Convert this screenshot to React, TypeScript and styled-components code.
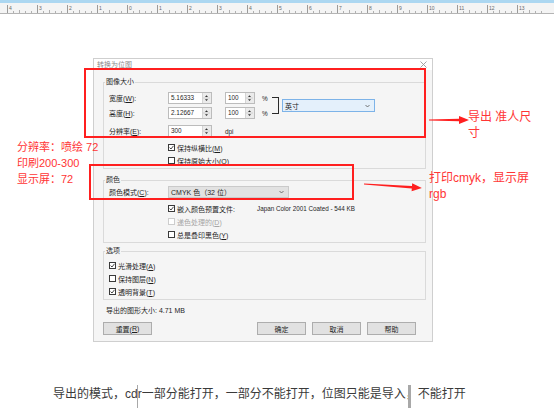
import type { ReactNode } from "react";
import styled, { createGlobalStyle } from "styled-components";

const GlobalStyle = createGlobalStyle`
  html, body {
    margin: 0;
    padding: 0;
    background: #fff;
  }
  body {
    font-family: "Liberation Sans", "Noto Sans CJK SC", sans-serif;
  }
`;

const Screen = styled.div`
  position: relative;
  width: 554px;
  height: 408px;
  overflow: hidden;
  background: #fff;
`;

// ruler strip along the top of the drawing window
const RulerBar = styled.div`
  height: 10px;
  border-top: 3px solid #acd7f1;
  border-bottom: 1px solid #b4b4b4;
  background: #f4f4f4;
  svg {
    display: block;
  }
`;

const Canvas = styled.div`
  position: relative;
  height: 394px;
`;

const PageEdge = styled.div<{ $left: number; $w: number }>`
  position: absolute;
  top: 327px;
  bottom: 0;
  left: ${(p) => p.$left}px;
  width: ${(p) => p.$w}px;
  background: #a8a8a8;
`;

const Caption = styled.p`
  margin: 44px 0 0 53px;
  font-size: 12px;
  line-height: 16px;
  color: #3a3a3a;
  white-space: nowrap;
`;

// dialog
const Dialog = styled.div`
  margin: 44px 0 0 93px;
  width: 340px;
  box-sizing: border-box;
  border: 1px solid #cfcfcf;
  background: #f5f5f5;
  font-size: 7px;
  color: #1f1f1f;
  display: flex;
  flex-direction: column;
`;

const TitleBar = styled.div`
  height: 11px;
  background: #fff;
  display: flex;
  align-items: center;
  justify-content: space-between;
  padding: 0 5px 0 3px;
  color: #8c8c8c;
  line-height: 11px;
`;

const Body = styled.div`
  padding: 7px 6px 6px 9px;
  display: flex;
  flex-direction: column;
`;

const Group = styled.fieldset<{ $gap?: number; $pt?: number }>`
  margin: ${(p) => p.$gap ?? 0}px 0 0 0;
  padding: ${(p) => p.$pt ?? 0}px 5px 1px 5px;
  border: 1px solid #dadada;
  min-width: 0;
  display: flex;
  flex-direction: column;
`;

const Legend = styled.legend`
  padding: 0 1px;
  margin-left: -4px;
  line-height: 10px;
  font-size: 7px;
  color: #2a2a2a;
`;

const DimBlock = styled.div`
  display: flex;
  align-items: center;
`;

const DimRows = styled.div`
  display: flex;
  flex-direction: column;
  gap: 3px;
`;

const FieldRow = styled.div<{ $mt?: number }>`
  display: flex;
  align-items: center;
  height: 12px;
  margin-top: ${(p) => p.$mt ?? 0}px;
`;

const FieldLabel = styled.span`
  width: 59px;
  flex: none;
  white-space: nowrap;
`;

const SpinField = styled.div<{ $w: number; $ml?: number }>`
  width: ${(p) => p.$w}px;
  margin-left: ${(p) => p.$ml ?? 0}px;
  height: 12px;
  box-sizing: border-box;
  border: 1px solid #bcbcbc;
  background: #fff;
  display: flex;
`;

const SpinValue = styled.span`
  flex: 1;
  padding-left: 2px;
  font-size: 6.4px;
  line-height: 10px;
`;

const SpinButtons = styled.span`
  width: 8px;
  border-left: 1px solid #d4d4d4;
  background: #ebebeb;
  svg {
    display: block;
  }
`;

const Unit = styled.span<{ $w: number; $ml: number }>`
  width: ${(p) => p.$w}px;
  margin-left: ${(p) => p.$ml}px;
  font-size: 6.4px;
`;

const Bracket = styled.div`
  width: 6px;
  height: 15px;
  border: 1.5px solid #2b2b2b;
  border-left: none;
  margin-right: 3px;
`;

const Select = styled.div<{ $w: number; $tint?: boolean }>`
  width: ${(p) => p.$w}px;
  height: ${(p) => (p.$tint ? 13 : 12)}px;
  box-sizing: border-box;
  border: 1px solid ${(p) => (p.$tint ? "#7db3e8" : "#cacaca")};
  background: ${(p) => (p.$tint ? "#e4f0fb" : "#e2e2e2")};
  display: flex;
  align-items: center;
  justify-content: space-between;
  padding: 0 4px 0 2px;
  white-space: nowrap;
`;

const CheckList = styled.div<{ $mt?: number; $indent?: number }>`
  display: flex;
  flex-direction: column;
  margin-top: ${(p) => p.$mt ?? 0}px;
  padding-left: ${(p) => p.$indent ?? 0}px;
`;

const CheckRow = styled.div<{ $off?: boolean }>`
  height: 13px;
  display: flex;
  align-items: center;
  gap: 2px;
  white-space: nowrap;
  color: ${(p) => (p.$off ? "#a6a6a6" : "inherit")};
`;

const Box = styled.span<{ $off?: boolean }>`
  width: 7px;
  height: 7px;
  box-sizing: border-box;
  border: 1px solid ${(p) => (p.$off ? "#cdcdcd" : "#3a3a3a")};
  background: #fff;
  flex: none;
  svg {
    display: block;
  }
`;

const CheckText = styled.span<{ $w?: number }>`
  width: ${(p) => (p.$w ? `${p.$w}px` : "auto")};
`;

const ProfileText = styled.span`
  font-size: 6.3px;
`;

const SizeInfo = styled.div`
  margin-top: 6px;
  padding-left: 3px;
  line-height: 10px;
`;

const ButtonRow = styled.div`
  margin-top: 6px;
  display: flex;
  justify-content: space-between;
  padding-right: 10px;
`;

const ButtonGroup = styled.div`
  display: flex;
  gap: 6px;
`;

const Button = styled.div`
  width: 49px;
  height: 13px;
  box-sizing: border-box;
  border: 1px solid #adadad;
  background: #e1e1e1;
  display: flex;
  align-items: center;
  justify-content: center;
`;

// red markup drawn over the screenshot
const Frame = styled.div<{ $x: number; $y: number; $w: number; $h: number }>`
  position: absolute;
  left: ${(p) => p.$x}px;
  top: ${(p) => p.$y}px;
  width: ${(p) => p.$w}px;
  height: ${(p) => p.$h}px;
  box-sizing: border-box;
  border: 2px solid #ff1f1f;
`;

const Note = styled.div<{ $x: number; $y: number; $size: number }>`
  position: absolute;
  left: ${(p) => p.$x}px;
  top: ${(p) => p.$y}px;
  font-size: ${(p) => p.$size}px;
  line-height: 16px;
  color: #ff3535;
  white-space: nowrap;
`;

const ArrowSvg = styled.svg<{ $x: number; $y: number }>`
  position: absolute;
  left: ${(p) => p.$x}px;
  top: ${(p) => p.$y}px;
`;

const rulerLabels = [4, 3, 2, 1, 0, 1, 2, 3, 4, 5, 6, 7, 8, 9, 10, 11, 12, 13];

function Ruler() {
  return (
    <RulerBar>
      <svg width="554" height="10">
        {rulerLabels.map((n, i) => {
          const x = 7 + i * 30;
          return (
            <g key={i}>
              <line x1={x + 0.5} y1={2} x2={x + 0.5} y2={10} stroke="#9a9a9a" />
              <text x={x + 2} y={6.5} fontSize={5} fill="#6a6a6a" fontFamily="Liberation Sans">
                {n}
              </text>
              {[1, 2, 3, 4].map((j) => (
                <line
                  key={j}
                  x1={x + 6 * j + 0.5}
                  y1={j === 2 ? 7 : 8}
                  x2={x + 6 * j + 0.5}
                  y2={10}
                  stroke="#b0b0b0"
                />
              ))}
            </g>
          );
        })}
      </svg>
    </RulerBar>
  );
}

function Spinner({ value, w, ml }: { value: string; w: number; ml?: number }) {
  return (
    <SpinField $w={w} $ml={ml}>
      <SpinValue>{value}</SpinValue>
      <SpinButtons>
        <svg width="7" height="10">
          <path d="M2 4 L3.5 2.3 L5 4 Z" fill="#333" />
          <line x1="0" y1="5" x2="7" y2="5" stroke="#d0d0d0" />
          <path d="M2 6.3 L3.5 8 L5 6.3 Z" fill="#333" />
        </svg>
      </SpinButtons>
    </SpinField>
  );
}

function Chevron() {
  return (
    <svg width="5" height="4">
      <path d="M0.5 1 L2.5 3 L4.5 1" stroke="#555" strokeWidth="0.8" fill="none" />
    </svg>
  );
}

function Check({ label, on, off, w }: { label: ReactNode; on?: boolean; off?: boolean; w?: number }) {
  return (
    <>
      <Box $off={off}>
        {on && (
          <svg width="5" height="5">
            <path d="M0.6 2.6 L2 4 L4.5 0.8" stroke="#333" strokeWidth="0.9" fill="none" />
          </svg>
        )}
      </Box>
      <CheckText $w={w}>{label}</CheckText>
    </>
  );
}

// tapered shaft with a filled head, pointing along +x
function Arrow({ len }: { len: number }) {
  const s = len - 10;
  return (
    <polygon
      points={`0,-0.5 ${s},-1.3 ${s},-4 ${len},0 ${s},4 ${s},1.3 0,0.5`}
      fill="#ff1f1f"
    />
  );
}

export default function App() {
  return (
    <Screen>
      <GlobalStyle />
      <Ruler />
      <Canvas>
        <PageEdge $left={137} $w={1} />
        <PageEdge $left={408} $w={3} />
        <Dialog>
          <TitleBar>
            <span>转换为位图</span>
            <svg width="7" height="7">
              <path d="M0.5 0.5 L6.5 6.5 M6.5 0.5 L0.5 6.5" stroke="#9a9a9a" strokeWidth="0.9" />
            </svg>
          </TitleBar>
          <Body>
            <Group $pt={5}>
              <Legend>图像大小</Legend>
              <DimBlock>
                <DimRows>
                  <FieldRow>
                    <FieldLabel>
                      宽度(<u>W</u>):
                    </FieldLabel>
                    <Spinner value="5.16333" w={44} />
                    <Spinner value="100" w={30} ml={13} />
                    <Unit $w={10} $ml={7}>%</Unit>
                  </FieldRow>
                  <FieldRow>
                    <FieldLabel>
                      高度(<u>H</u>):
                    </FieldLabel>
                    <Spinner value="2.12667" w={44} />
                    <Spinner value="100" w={30} ml={13} />
                    <Unit $w={10} $ml={7}>%</Unit>
                  </FieldRow>
                </DimRows>
                <Bracket />
                <Select $w={93} $tint>
                  <span>英寸</span>
                  <Chevron />
                </Select>
              </DimBlock>
              <FieldRow $mt={6}>
                <FieldLabel>
                  分辨率(<u>E</u>):
                </FieldLabel>
                <Spinner value="300" w={44} />
                <Unit $w={20} $ml={13}>dpi</Unit>
              </FieldRow>
              <CheckList $mt={4} $indent={59}>
                <CheckRow>
                  <Check on label={<>保持纵横比(<u>M</u>)</>} />
                </CheckRow>
                <CheckRow>
                  <Check label={<>保持原始大小(<u>O</u>)</>} />
                </CheckRow>
              </CheckList>
            </Group>

            <Group $gap={6} $pt={1}>
              <Legend>颜色</Legend>
              <FieldRow>
                <FieldLabel>
                  颜色模式(<u>C</u>):
                </FieldLabel>
                <Select $w={121}>
                  <span>CMYK 色（32 位）</span>
                  <Chevron />
                </Select>
              </FieldRow>
              <CheckList $mt={4} $indent={59}>
                <CheckRow>
                  <Check on w={78} label="嵌入颜色预置文件:" />
                  <ProfileText>Japan Color 2001 Coated - 544 KB</ProfileText>
                </CheckRow>
                <CheckRow $off>
                  <Check off label={<>递色处理的(<u>D</u>)</>} />
                </CheckRow>
                <CheckRow>
                  <Check label={<>总是叠印黑色(<u>Y</u>)</>} />
                </CheckRow>
              </CheckList>
            </Group>

            <Group $gap={3} $pt={3}>
              <Legend>选项</Legend>
              <CheckList>
                <CheckRow>
                  <Check on label={<>光滑处理(<u>A</u>)</>} />
                </CheckRow>
                <CheckRow>
                  <Check label={<>保持图层(<u>N</u>)</>} />
                </CheckRow>
                <CheckRow>
                  <Check on label={<>透明背景(<u>T</u>)</>} />
                </CheckRow>
              </CheckList>
            </Group>

            <SizeInfo>导出的图形大小: 4.71 MB</SizeInfo>
            <ButtonRow>
              <Button>
                重置(<u>R</u>)
              </Button>
              <ButtonGroup>
                <Button>确定</Button>
                <Button>取消</Button>
                <Button>帮助</Button>
              </ButtonGroup>
            </ButtonRow>
          </Body>
        </Dialog>
        <Caption>导出的模式，cdr一部分能打开，一部分不能打开，位图只能是导入，不能打开</Caption>
      </Canvas>

      <Frame $x={84} $y={68} $w={342} $h={70} />
      <Frame $x={89} $y={164} $w={265} $h={36} />

      <ArrowSvg $x={428} $y={114} width="42" height="12">
        <g transform="translate(1,6)">
          <Arrow len={40} />
        </g>
      </ArrowSvg>
      <ArrowSvg $x={362} $y={177} width="64" height="16">
        <g transform="translate(2,7) rotate(3.9)">
          <Arrow len={58} />
        </g>
      </ArrowSvg>

      <Note $x={17} $y={139} $size={11}>
        分辨率：喷绘 72
        <br />
        印刷200-300
        <br />
        显示屏：72
      </Note>
      <Note $x={468} $y={109} $size={12}>
        导出 准人尺
        <br />寸
      </Note>
      <Note $x={429} $y={170} $size={12}>
        打印cmyk，显示屏
        <br />
        rgb
      </Note>
    </Screen>
  );
}
